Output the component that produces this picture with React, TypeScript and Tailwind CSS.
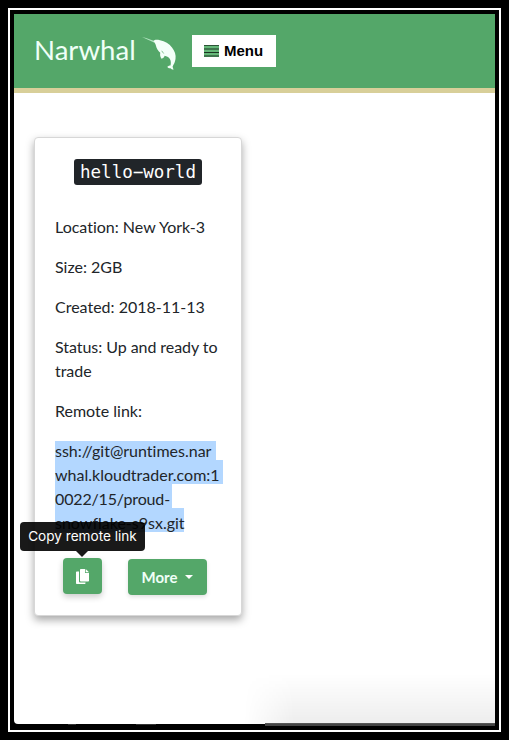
import React from 'react';

const remoteLines = [
  { text: 'ssh://git@runtimes.nar', box: 'w-[161px] h-[19px]', line: 'leading-[20px]' },
  { text: 'whal.kloudtrader.com:1', box: 'w-[168px] h-6', line: 'leading-[30px]' },
  { text: '0022/15/proud-', box: 'w-[117px] h-6', line: 'leading-[30px] tracking-[-0.15px]' },
  { text: 'snowflake-s9sx.git', box: 'w-[129px] h-6', line: 'leading-[30px]' },
];

function NarwhalLogo() {
  return (
    <svg className="ml-[6px] h-[36px] w-[36px] shrink-0" viewBox="0 0 36 36" fill="#f4fff9">
      <path d="M0 1 4 2 13 5.300 12 6.500Z" fill="#b4e5c3" />
      <path d="M11.500 5C12.500 3.500 15 3.500 18 4.200 23 5.200 27 7.500 30 11.500c2.700 3.500 4.200 7.500 3.500 11.500-.4 2.800-1.500 5.200-2.800 7.200-.3 1 .7 2 .8 3.600-1.500 0-2.300-.8-3-1.500-1.200.2-2.600-.4-3.200-1.500 1.100-1 2.300-1.300 3.200-1.300.6-2.500.5-4.800-.8-6.800-1.300-1.800-3-2.500-5-3-.6 1.400-1.500 2.700-3.200 3-1.300-2-1.700-4-1.200-6-2.300-1.800-3.800-4.500-4.500-7.500-.3-1.500-1.700-2.700-2.300-4.200Z" />
      <path d="m19.700 14.800 2 2.700" fill="none" stroke="#54a769" strokeWidth=".7" />
    </svg>
  );
}

function MenuIcon() {
  return (
    <svg className="h-3 w-[15px]" viewBox="0 0 15 12">
      <path fill="#65b779" d="M0 0h15v12H0z" />
      <path fill="#1b3522" d="M0 .2h15v.8H0zM0 3.500h15v.9H0zM0 7h15v.9H0zM0 10.600h15v1H0z" />
    </svg>
  );
}

function CopyIcon() {
  return (
    <svg className="h-4 w-[13px]" viewBox="0 0 13 16" fill="white">
      <path d="M4.800 0H9v4h4v7.800c0 .5-.3.800-.8.800H4.800c-.5 0-.8-.3-.8-.8V.8c0-.5.3-.8.800-.8Z" />
      <path d="M9.700 0 13 3.300H9.700Z" />
      <path d="M.8 2.500H3v9.800c0 .8.500 1.300 1.300 1.300H9.500v.6c0 .5-.3.800-.8.800H.8c-.5 0-.8-.3-.8-.8V3.300c0-.5.3-.8.800-.8Z" />
    </svg>
  );
}

export default function App() {
  return (
    <div className="h-[740px] w-[509px] bg-black p-2 font-[Lato,sans-serif] text-base text-[#212529] [font-variant-ligatures:none]">
      <div className="h-[724px] w-[493px] border-2 border-white px-1 pt-1">
        <div className="relative h-[710px] overflow-hidden rounded-bl-[4px] bg-white">
          <header className="flex h-[79px] items-start border-b-[5px] border-[#d8cf99] bg-[#54a769] pl-5">
            <span className="mt-[16px] w-[102px] whitespace-nowrap text-[27.6px] leading-[40px] text-[#effff7]">Narwhal</span>
            <div className="mt-[22px]"><NarwhalLogo /></div>
            <button className="ml-[14px] mt-[21px] flex h-8 w-[84px] items-center gap-[5px] bg-white pl-3 font-['Liberation_Sans',sans-serif] text-[15px] font-bold text-black">
              <MenuIcon />
              <span>Menu</span>
            </button>
          </header>

          <main className="relative ml-5 mt-11 h-[479px] w-[208px] rounded border border-[#d7d7d7] bg-white px-5 pt-[21px] shadow-[0_4px_8px_rgba(0,0,0,0.35)]">
            <h1 className="mx-auto flex h-[26px] w-32 items-center justify-center rounded-[3px] bg-[#212529] font-['DejaVu_Sans_Mono',monospace] text-[17.5px] text-white">hello−world</h1>
            <div className="mt-[30px] flex flex-col gap-4 leading-6">
              <p>Location: New York-3</p>
              <p>Size: 2GB</p>
              <p>Created: 2018-11-13</p>
              <p className="tracking-[-0.05px]">Status: Up and ready to trade</p>
              <p>Remote link:</p>
            </div>
            <div className="mt-[18px]">
              {remoteLines.map((row) => (
                <div key={row.text} className={`whitespace-nowrap bg-[#b3d7ff] ${row.box} ${row.line}`}>{row.text}</div>
              ))}
            </div>
            <div className="ml-2 mt-[26px] flex items-start gap-[26px]">
              <button className="flex h-9 w-[39px] items-center justify-center rounded bg-[#54a769] pt-px shadow-[0_3px_6px_rgba(0,0,0,0.2)]"><CopyIcon /></button>
              <button className="mt-px flex h-9 w-[79px] items-center justify-center gap-2 rounded bg-[#54a769] text-[15px] font-bold text-[#effff7] shadow-[0_2px_4px_rgba(0,0,0,0.12)]">
                More
                <span className="border-x-4 border-t-4 border-x-transparent border-t-white" />
              </button>
            </div>
            <div className="absolute left-[-15px] top-[384px] flex h-[29px] w-[125px] items-center justify-center whitespace-nowrap rounded bg-black/90 font-[Inter,sans-serif] text-[13.6px] text-white">
              Copy remote link
              <span className="absolute left-[56px] top-[29px] border-x-[6px] border-t-[6px] border-x-transparent border-t-black/90" />
            </div>
          </main>
          <div className="absolute bottom-0 left-[230px] h-[50px] w-[251px] bg-linear-to-b from-transparent to-black/7 [mask-image:linear-gradient(to_right,transparent,black_50px)]" />
          <div className="absolute bottom-0 left-[251px] right-0 h-px bg-[#555]" />
        </div>
        <div className="flex h-[2px] bg-black">
          <span className="ml-[54px] h-px w-[8px] bg-[#333]" />
          <span className="ml-[60px] h-px w-[20px] bg-[#333]" />
          <span className="ml-[109px] h-[2px] flex-1 bg-[#444]" />
        </div>
      </div>
    </div>
  );
}
